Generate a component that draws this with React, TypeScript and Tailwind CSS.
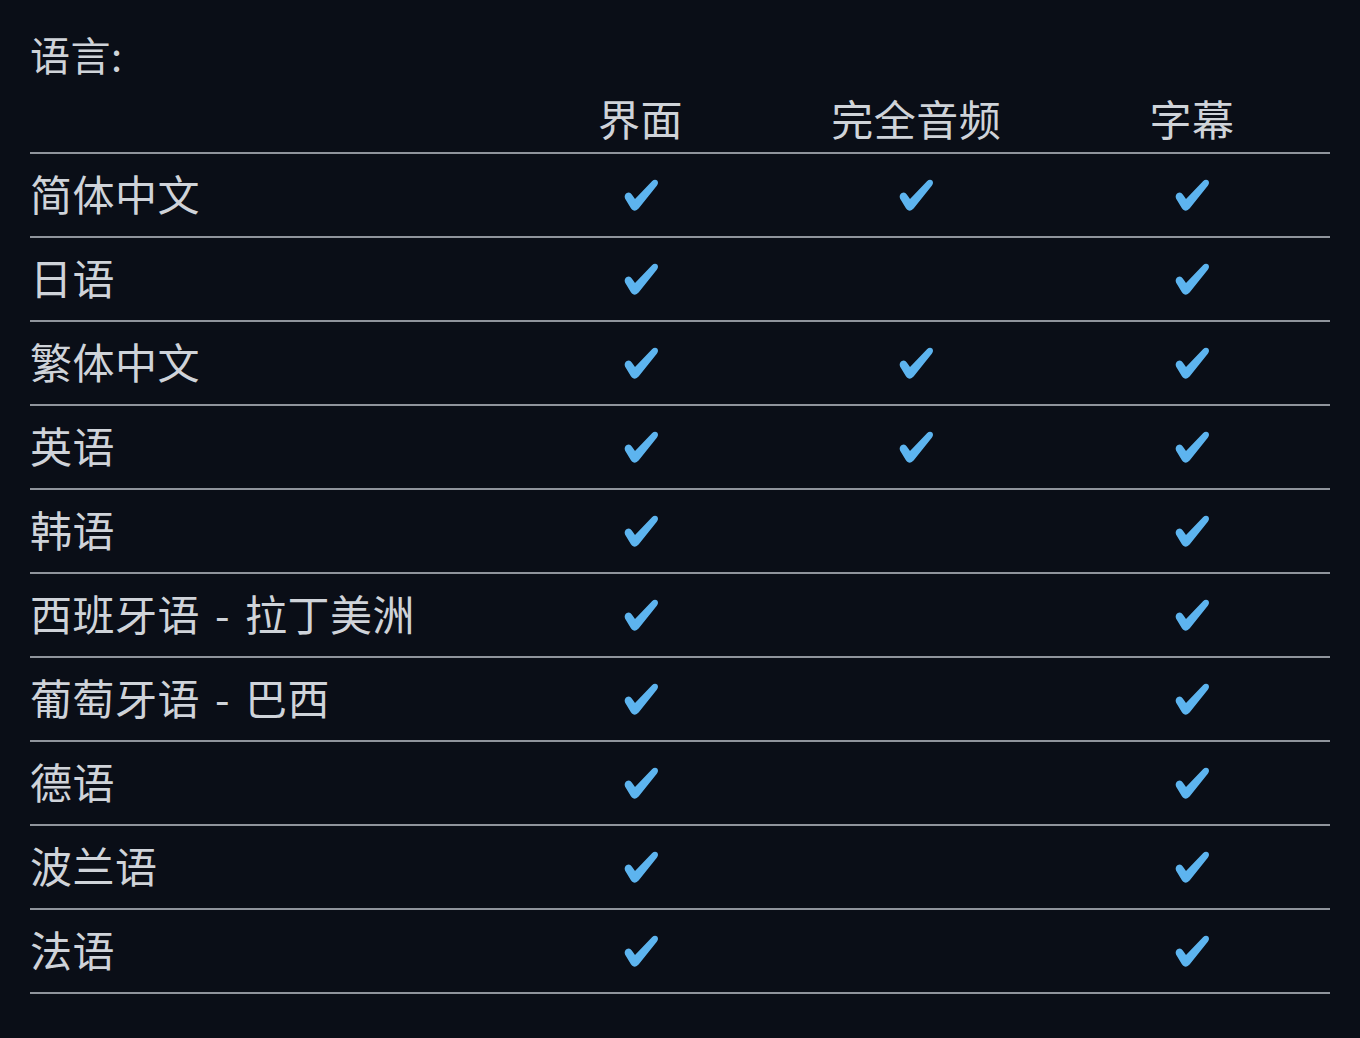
const font = { fontFamily: '"Noto Sans CJK SC", "Noto Sans", sans-serif' };

type Row = { name: string; ui: boolean; audio: boolean; subs: boolean };

const rows: Row[] = [
  { name: '简体中文', ui: true, audio: true, subs: true },
  { name: '日语', ui: true, audio: false, subs: true },
  { name: '繁体中文', ui: true, audio: true, subs: true },
  { name: '英语', ui: true, audio: true, subs: true },
  { name: '韩语', ui: true, audio: false, subs: true },
  { name: '西班牙语 - 拉丁美洲', ui: true, audio: false, subs: true },
  { name: '葡萄牙语 - 巴西', ui: true, audio: false, subs: true },
  { name: '德语', ui: true, audio: false, subs: true },
  { name: '波兰语', ui: true, audio: false, subs: true },
  { name: '法语', ui: true, audio: false, subs: true },
];

function Check() {
  return (
    <svg width="36" height="34" viewBox="0 0 36 34" className="block">
      <path
        d="M2 20.5 Q0.8 17 3.8 15 Q6.8 13.6 8.8 16.4 L12 21 L29 3.2 Q31.8 0.8 34.2 2.6 Q36 4.8 33.8 7.8 L15.6 30.6 Q12.8 33.8 9.6 32 Q8.4 31.2 7.6 29.8 Z"
        fill="#5db4ef"
      />
    </svg>
  );
}

function Cell({ on }: { on: boolean }) {
  return <div className="flex w-[276px] items-center justify-center">{on ? <Check /> : null}</div>;
}

export default function App() {
  return (
    <div className="min-h-screen bg-[#0a0e17] px-[30px] text-[#cfd3d9]" style={font}>
      <div className="h-[88px] pt-[33px] text-[40px] leading-[42px] tracking-[0.5px]">语言:</div>

      <div className="flex h-[66px] items-center border-b-2 border-[#8f949c] pb-[4px] text-[42px] leading-[42px] tracking-[0.5px]">
        <div className="w-[473px]" />
        <div className="w-[276px] text-center">界面</div>
        <div className="w-[276px] text-center">完全音频</div>
        <div className="w-[276px] text-center">字幕</div>
      </div>

      {rows.map((row) => (
        <div key={row.name} className="flex h-[84px] items-center border-b-2 border-[#8f949c]">
          <div className="w-[473px] whitespace-pre pb-[4px] text-[42px] leading-[42px] tracking-[0.5px] [word-spacing:5px]">
            {row.name}
          </div>
          <Cell on={row.ui} />
          <Cell on={row.audio} />
          <Cell on={row.subs} />
        </div>
      ))}
    </div>
  );
}
